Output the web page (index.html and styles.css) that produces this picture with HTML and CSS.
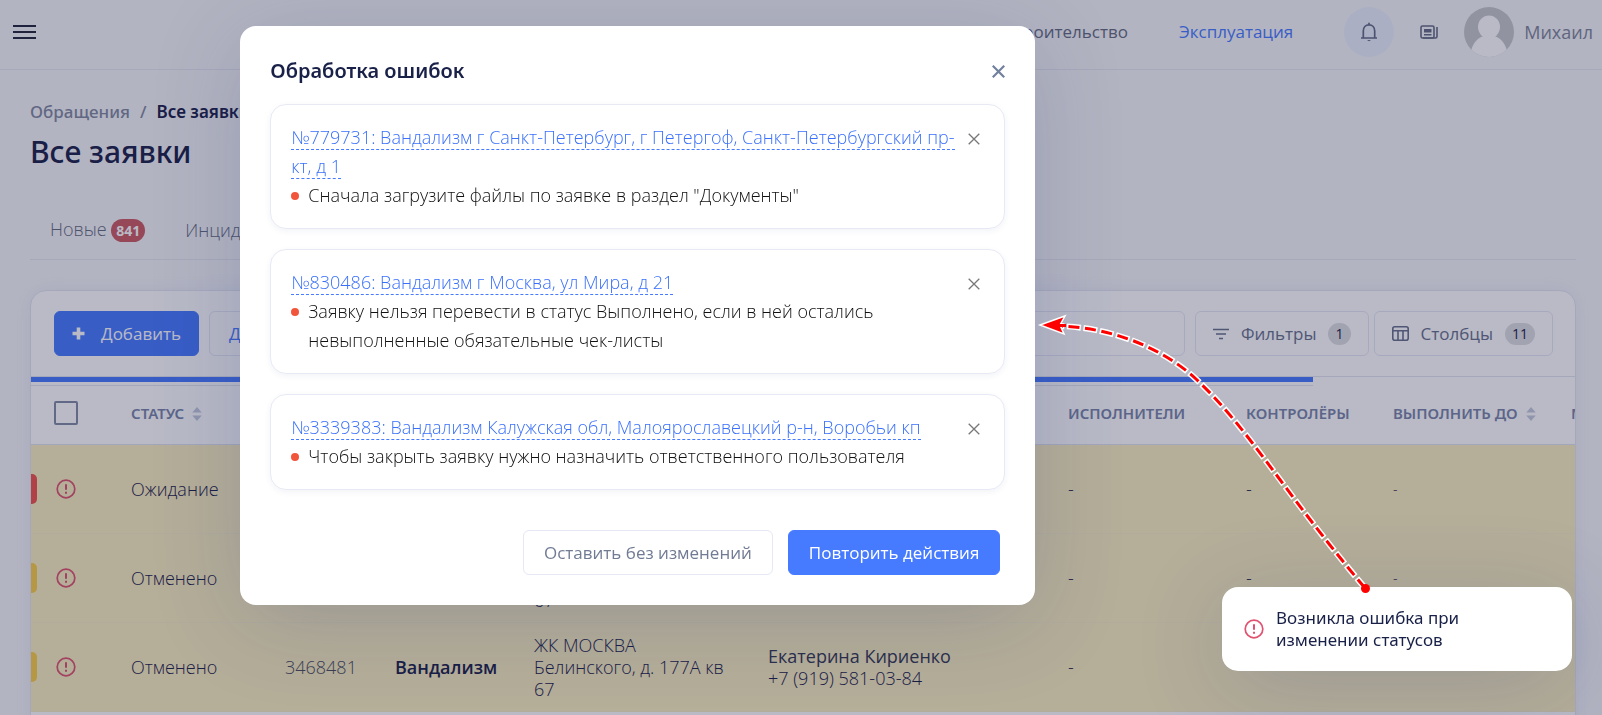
FILE: index.html
```html
<!DOCTYPE html>
<html lang="ru">
<head>
<meta charset="utf-8">
<meta name="viewport" content="width=device-width, initial-scale=1">
<title>Все заявки</title>
<link rel="stylesheet" href="styles.css">
</head>
<body>
<svg class="sprite" aria-hidden="true">
  <symbol id="alert" viewBox="0 0 20 20"><circle cx="10" cy="10" r="8.8" fill="none" stroke="currentColor" stroke-width="1.7"/><path d="M10 5.3v5.4M10 12.7v2" stroke="currentColor" stroke-width="2" fill="none"/></symbol>
  <symbol id="cross" viewBox="0 0 12 12"><path d="M.7.7l10.600 10.600M11.300.7L.7 11.300" stroke="currentColor" fill="none"/></symbol>
  <symbol id="sort" viewBox="0 0 10 16"><path d="M5 1l4.700 5.500H.3zM5 15L.3 9.500h9.400z" fill="currentColor"/></symbol>
</svg>
<div class="page">
  <header class="header">
    <button class="menu" aria-label="Меню"><span></span><span></span><span></span></button>
    <nav class="nav">
      <a class="nav-link" href="#">Строительство</a>
      <a class="nav-link active" href="#">Эксплуатация</a>
    </nav>
    <div class="user">
      <button class="bell" aria-label="Уведомления">
        <svg width="18" height="20" viewBox="0 0 18 20" fill="none" stroke="currentColor" stroke-width="1.7"><path d="M1 16h16M3.300 15.500V9c0-3.500 2.300-6.200 5.700-6.200S14.700 5.500 14.700 9v6.500M9 3V.8"/><path d="M7 18h4l-2 1.300z" fill="currentColor" stroke="none"/></svg>
      </button>
      <button class="news" aria-label="Новости">
        <svg width="18" height="14" viewBox="0 0 18 14" fill="none" stroke="currentColor" stroke-width="1.600"><rect x="1" y="1" width="13" height="12" rx="1.500"/><path d="M17 2v9.500c0 1-.7 1.500-1.500 1.500H3M4 9.700h7.500"/><path d="M4 4h7.500v3.500H4z" fill="currentColor" stroke="none"/></svg>
      </button>
      <svg class="avatar" viewBox="0 0 50 50"><defs><clipPath id="round"><circle cx="25" cy="25" r="25"/></clipPath></defs><g clip-path="url(#round)"><path fill="#c6c7cb" d="M0 0h50v50H0z"/><ellipse cx="25" cy="20" rx="11" ry="11.500" fill="#fff"/><path fill="#fff" d="M6 50c1-12 6-18 12.500-20.500h13C38 32 43 38 44 50z"/></g></svg>
      <span class="user-name">Михаил</span>
    </div>
  </header>
  <main class="main">
    <nav class="crumbs"><a href="#">Обращения</a><span>/</span><b>Все заявки</b></nav>
    <h1 class="title">Все заявки</h1>
    <nav class="tabs"><a href="#">Новые <span class="count">841</span></a><a href="#">Инциденты</a></nav>
    <section class="card">
      <div class="toolbar">
        <button class="btn primary add"><svg width="13" height="13" viewBox="0 0 13 13"><path d="M6.500.5v12M.5 6.500h12" stroke="currentColor" stroke-width="3.600"/></svg>Добавить</button>
        <button class="btn outline action">Действия</button>
        <input class="search" type="text" aria-label="Поиск">
        <div class="tools">
          <button class="btn tool"><svg width="16" height="12" viewBox="0 0 16 12"><path d="M0 1.500h16M3 6h10M6 10.500h4" stroke="currentColor" stroke-width="1.600"/></svg>Фильтры <span class="pill">1</span></button>
          <button class="btn tool"><svg width="17" height="15" viewBox="0 0 17 15" fill="none" stroke="currentColor" stroke-width="1.600"><rect x=".8" y=".8" width="15.400" height="13.400" rx="2"/><path d="M1 4.800h15M6 5v9M11 5v9"/></svg>Столбцы <span class="pill">11</span></button>
        </div>
      </div>
      <div class="progress"><div class="progress-value" style="width:83%"></div></div>
      <div class="scroller">
        <table class="table">
          <colgroup><col class="c-check"><col class="c-status"><col class="c-num"><col class="c-type"><col class="c-addr"><col class="c-person"><col class="c-exec"><col class="c-ctrl"><col class="c-due"><col class="c-more"></colgroup>
          <thead><tr>
            <th><input class="check" type="checkbox" aria-label="Выбрать все"></th>
            <th>СТАТУС<svg class="sort"><use href="#sort"/></svg></th><th></th><th></th><th></th><th></th>
            <th>ИСПОЛНИТЕЛИ</th><th>КОНТРОЛЁРЫ</th>
            <th>ВЫПОЛНИТЬ ДО<svg class="sort"><use href="#sort"/></svg></th><th>МЕТКИ</th>
          </tr></thead>
          <tbody>
            <tr><td class="mark red"><svg class="alert"><use href="#alert"/></svg></td><td>Ожидание</td><td></td><td></td><td></td><td></td><td>-</td><td>-</td><td class="small">-</td><td></td></tr>
            <tr><td class="mark"><svg class="alert"><use href="#alert"/></svg></td><td>Отменено</td><td></td><td></td><td>ЖК МОСКВА Белинского, д. 177А кв 67</td><td></td><td>-</td><td>-</td><td class="small">-</td><td></td></tr>
            <tr><td class="mark"><svg class="alert"><use href="#alert"/></svg></td><td>Отменено</td><td class="num">3468481</td><td class="strong">Вандализм</td><td>ЖК МОСКВА Белинского, д. 177А кв 67</td><td><span class="person">Екатерина Кириенко</span>+7 (919) 581-03-84</td><td>-</td><td></td><td></td><td></td></tr>
          </tbody>
        </table>
      </div>
    </section>
  </main>
</div>
<div class="overlay">
  <section class="modal" role="dialog" aria-labelledby="dlg-title">
    <header class="modal-head">
      <h2 id="dlg-title">Обработка ошибок</h2>
      <button class="close" aria-label="Закрыть"><svg width="13" height="13" stroke-width="2"><use href="#cross"/></svg></button>
    </header>
    <div class="errors">
      <article class="error">
        <div class="error-body"><a href="#">№779731: Вандализм г Санкт-Петербург, г Петергоф, Санкт-Петербургский пр-кт, д 1</a><p>Сначала загрузите файлы по заявке в раздел "Документы"</p></div>
        <button class="dismiss" aria-label="Убрать"><svg width="12" height="12" stroke-width="1.300"><use href="#cross"/></svg></button>
      </article>
      <article class="error">
        <div class="error-body"><a href="#">№830486: Вандализм г Москва, ул Мира, д 21</a><p>Заявку нельзя перевести в статус Выполнено, если в ней остались невыполненные обязательные чек-листы</p></div>
        <button class="dismiss" aria-label="Убрать"><svg width="12" height="12" stroke-width="1.300"><use href="#cross"/></svg></button>
      </article>
      <article class="error">
        <div class="error-body"><a href="#">№3339383: Вандализм Калужская обл, Малоярославецкий р-н, Воробьи кп</a><p>Чтобы закрыть заявку нужно назначить ответственного пользователя</p></div>
        <button class="dismiss" aria-label="Убрать"><svg width="12" height="12" stroke-width="1.300"><use href="#cross"/></svg></button>
      </article>
    </div>
    <footer class="modal-foot">
      <button class="btn plain">Оставить без изменений</button>
      <button class="btn primary">Повторить действия</button>
    </footer>
  </section>
  <div class="toast" role="alert"><svg class="alert"><use href="#alert"/></svg><p>Возникла ошибка при изменении статусов</p></div>
  <svg class="arrow" viewBox="0 0 1602 715" fill="none">
    <path d="M1365 588C1280 487 1250 430 1196 379C1158 344 1105 327 1058 326" stroke="#fff" stroke-width="6" stroke-dasharray="14 2.600" stroke-dashoffset="1.500"/>
    <path d="M1365 588C1280 487 1250 430 1196 379C1158 344 1105 327 1058 326" stroke="#f00" stroke-width="3" stroke-dasharray="11 5.600"/>
    <path d="M1040 325L1065 316L1060 325L1064 334z" fill="#f00" stroke="#fff" stroke-width="1.500"/>
    <path d="M1056 325.500h10" stroke="#f00" stroke-width="3"/>
    <circle cx="1365.500" cy="588.500" r="4.500" fill="#f00"/>
  </svg>
</div>
</body>
</html>
```
FILE: styles.css
```css
* { box-sizing: border-box; }
body {
  margin: 0;
  font-family: "Open Sans", "Noto Sans", sans-serif;
  font-size: 18px;
  font-weight: 300;
  color: #1a2148;
  background: #f7f7f8;
}
button, input { font: inherit; color: inherit; }
button { background: none; border: 0; padding: 0; cursor: pointer; }
a { text-decoration: none; color: inherit; }
h1, h2, p { margin: 0; }
.sprite { position: absolute; width: 0; height: 0; }
.page { height: 100vh; overflow: hidden; }

.header {
  display: flex;
  align-items: center;
  height: 70px;
  padding: 0 9px 6px 13px;
  border-bottom: 1px solid #e6e7ee;
}
.menu { display: grid; gap: 4px; width: 23px; }
.menu span { height: 2px; background: #22263a; }
.nav { display: flex; gap: 51px; margin-left: auto; color: #666c82; font-size: 17px; font-weight: 400; }
.nav-link.active { color: #477bff; }
.user { display: flex; align-items: center; margin-left: 51px; color: #646b85; }
.bell {
  display: grid;
  place-items: center;
  width: 50px;
  height: 50px;
  border-radius: 50%;
  background: #eaf0fb;
}
.news { display: grid; margin: 0 26px; }
.avatar { width: 50px; height: 50px; }
.user-name { margin-left: 10px; color: #80869a; font-weight: 400; }

.main { padding: 28px 26px 0 30px; }
.crumbs {
  display: flex;
  gap: 10px;
  font-family: "Noto Sans", sans-serif;
  font-size: 17px;
  line-height: 28px;
  font-weight: 500;
  color: #8189a0;
}
.crumbs b { font-weight: 600; color: #1a2148; }
.title {
  margin-top: 6px;
  font-family: "Noto Sans", sans-serif;
  font-size: 30px;
  line-height: 40px;
  font-weight: 500;
}
.tabs {
  display: flex;
  align-items: center;
  gap: 40px;
  height: 60px;
  margin-top: 28px;
  margin-bottom: 30px;
  padding: 0 20px;
  border-bottom: 1px solid #e6e7ee;
  color: #666c80;
}
.count {
  display: inline-block;
  padding: 0 5px;
  border-radius: 12px;
  background: #cd5b62;
  color: #fff;
  font-size: 14px;
  line-height: 23px;
  font-weight: 700;
}

.card {
  height: 600px;
  overflow: hidden;
  background: #fff;
  border: 1px solid #e3e6f0;
  border-radius: 16px;
  box-shadow: 0 0 20px #e8ebf6;
}
.toolbar {
  display: flex;
  gap: 10px;
  padding: 20px 22px 20px 23px;
  border-bottom: 1px solid #e3e6ee;
}
.btn {
  display: flex;
  align-items: center;
  justify-content: center;
  height: 45px;
  padding: 0 19px;
  border: 1px solid #e6e8f4;
  border-radius: 6px;
  font-size: 17px;
  font-weight: 400;
}
.btn.primary { background: #477bff; border-color: #477bff; color: #fff; font-weight: 500; }
.add { gap: 16px; padding: 0 17px; }
.btn.outline { color: #477bff; }
.search { flex: 1; min-width: 0; height: 45px; border: 1px solid #e6e8f4; border-radius: 6px; background: none; }
.tools { display: flex; gap: 5px; }
.tool { gap: 12px; padding: 0 17px; color: #68718c; }
.pill {
  padding: 0 7px;
  border-radius: 11px;
  background: #dfdfe1;
  color: #1a2148;
  font-size: 14px;
  line-height: 22px;
}
.progress { position: relative; height: 5px; }
.progress-value { height: 5px; background: #477bff; box-shadow: 0 3px 0 #fff, 0 4px 0 #e3e6ee; }
.scroller { overflow: hidden; }
.table { width: 1717px; table-layout: fixed; border-collapse: collapse; line-height: 22px; font-size: 18px; }
.c-check { width: 77px; }
.c-status { width: 154px; }
.c-num { width: 110px; }
.c-type { width: 139px; }
.c-addr { width: 234px; }
.c-person { width: 300px; }
.c-exec { width: 178px; }
.c-ctrl { width: 147px; }
.c-due { width: 178px; }
.c-more { width: 200px; }
.table th {
  height: 62px;
  padding: 0 10px 0 23px;
  text-align: left;
  font-family: "Noto Sans", sans-serif;
  font-size: 15px;
  font-weight: 600;
  color: #7a86a8;
  background: #fff;
  border-bottom: 1px solid #dfe2f0;
  white-space: nowrap;
}
.table td { height: 89px; padding: 0 10px 0 23px; background: #faeebe; border-bottom: 1px solid #f5ebc4; }
.table .num { color: #4e4e5c; }
.table .strong { font-weight: 600; }
.table .small { font-size: 14px; }
.person { display: block; font-weight: 500; color: #33384e; }
.check {
  appearance: none;
  display: block;
  width: 24px;
  height: 24px;
  margin: 0;
  border: 2px solid #838ca5;
  border-radius: 2px;
}
.sort { width: 10px; height: 16px; margin-left: 8px; vertical-align: -3px; color: #c5cadb; }
.mark { position: relative; color: #e0526f; }
.mark::before {
  content: "";
  position: absolute;
  left: 0;
  top: 29px;
  width: 6px;
  height: 30px;
  border-radius: 0 5px 5px 0;
  background: #fbcf45;
}
.mark.red::before { background: #f3524a; }
.alert { display: block; flex: none; width: 20px; height: 20px; margin-left: 2px; }

.overlay { position: fixed; inset: 0; background: rgba(22, 28, 65, .3); }
.modal {
  position: absolute;
  top: 26px;
  left: 15%;
  width: 795px;
  padding: 30px;
  border-radius: 16px;
  background: #fff;
  box-shadow: 0 15px 90px rgba(30, 50, 120, .2);
}
.modal-head { display: flex; justify-content: space-between; align-items: center; height: 30px; margin-bottom: 18px; }
.modal-head h2 { font-family: "Noto Sans", sans-serif; font-size: 20px; line-height: 30px; font-weight: 600; }
.close { display: grid; color: #71809c; }
.errors { display: grid; gap: 20px; }
.error {
  display: flex;
  gap: 7px;
  padding: 18px 24px 18px 20px;
  border: 1px solid #e7e9f5;
  border-radius: 16px;
  box-shadow: 0 2px 6px rgba(40, 50, 120, .06);
  line-height: 29px;
  color: #111;
}
.error-body { flex: 1; }
.error a { color: #3a70fa; border-bottom: 1px dashed #477bff; }
.error p { position: relative; padding-left: 17px; }
.error p::before {
  content: "";
  position: absolute;
  left: 0;
  top: 11px;
  width: 8px;
  height: 8px;
  border-radius: 50%;
  background: #f1553b;
}
.dismiss { display: grid; place-items: center; width: 12px; height: 32px; color: #777; }
.modal-foot { display: flex; justify-content: flex-end; gap: 15px; margin-top: 40px; padding-right: 5px; }
.modal-foot .btn { padding: 0 20px; }
.btn.plain { color: #717b94; }
.toast {
  position: absolute;
  right: 30px;
  bottom: 44px;
  display: flex;
  align-items: center;
  gap: 12px;
  width: 350px;
  height: 84px;
  padding: 0 20px;
  border-radius: 16px;
  background: #fff;
  box-shadow: 0 15px 90px rgba(30, 50, 120, .2);
  font-family: "Noto Sans", sans-serif;
  font-size: 17px;
  line-height: 22px;
  font-weight: 400;
}
.toast p { max-width: 230px; }
.toast .alert { color: #e0526f; }
.arrow { position: absolute; top: 0; left: 0; width: 100%; pointer-events: none; }
```
